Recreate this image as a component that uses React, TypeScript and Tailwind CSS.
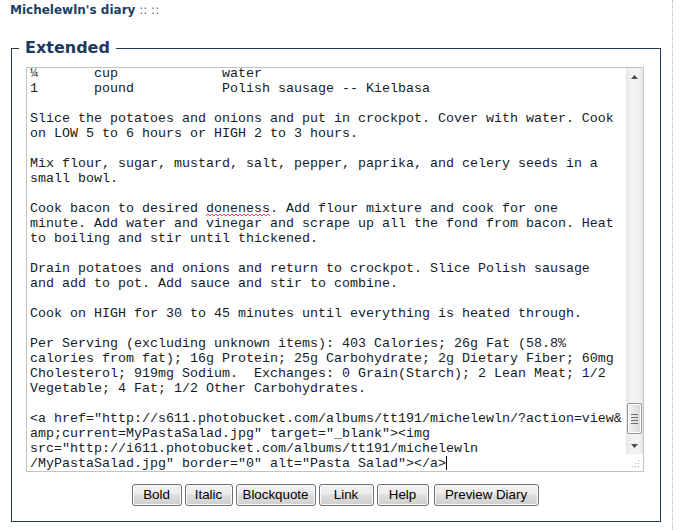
import type { ReactNode } from "react"

const mono = { fontFamily: '"Liberation Mono", "Courier New", monospace' }

function Squiggle({ children }: { children: ReactNode }) {
  return (
    <span className="relative">
      {children}
      <svg className="absolute left-0 bottom-[-1px]" width="64" height="3" viewBox="0 0 64 3">
        <path
          d="M0 2 L2 0 L4 2 L6 0 L8 2 L10 0 L12 2 L14 0 L16 2 L18 0 L20 2 L22 0 L24 2 L26 0 L28 2 L30 0 L32 2 L34 0 L36 2 L38 0 L40 2 L42 0 L44 2 L46 0 L48 2 L50 0 L52 2 L54 0 L56 2 L58 0 L60 2 L62 0 L64 2"
          fill="none"
          stroke="#e02020"
          strokeWidth="0.8"
        />
      </svg>
    </span>
  )
}

const lines: ReactNode[] = [
  "¼       cup             water",
  "1       pound           Polish sausage -- Kielbasa",
  "",
  "Slice the potatoes and onions and put in crockpot. Cover with water. Cook",
  "on LOW 5 to 6 hours or HIGH 2 to 3 hours.",
  "",
  "Mix flour, sugar, mustard, salt, pepper, paprika, and celery seeds in a",
  "small bowl.",
  "",
  <>
    {"Cook bacon to desired "}
    <Squiggle>doneness</Squiggle>
    {". Add flour mixture and cook for one"}
  </>,
  "minute. Add water and vinegar and scrape up all the fond from bacon. Heat",
  "to boiling and stir until thickened.",
  "",
  "Drain potatoes and onions and return to crockpot. Slice Polish sausage",
  "and add to pot. Add sauce and stir to combine.",
  "",
  "Cook on HIGH for 30 to 45 minutes until everything is heated through.",
  "",
  "Per Serving (excluding unknown items): 403 Calories; 26g Fat (58.8%",
  "calories from fat); 16g Protein; 25g Carbohydrate; 2g Dietary Fiber; 60mg",
  "Cholesterol; 919mg Sodium.  Exchanges: 0 Grain(Starch); 2 Lean Meat; 1/2",
  "Vegetable; 4 Fat; 1/2 Other Carbohydrates.",
  "",
  '<a href="http://s611.photobucket.com/albums/tt191/michelewln/?action=view&',
  'amp;current=MyPastaSalad.jpg" target="_blank"><img',
  'src="http://i611.photobucket.com/albums/tt191/michelewln',
  <>
    {'/MyPastaSalad.jpg" border="0" alt="Pasta Salad"></a>'}
    <span className="inline-block w-px h-[14px] bg-black align-[-3px]" />
  </>,
]

const buttons = [
  { label: "Bold", w: "w-[50px]" },
  { label: "Italic", w: "w-[48px]" },
  { label: "Blockquote", w: "w-[80px]" },
  { label: "Link", w: "w-[55px]" },
  { label: "Help", w: "w-[52px]" },
  { label: "Preview Diary", w: "w-[105px] ml-[2px]" },
]

function Arrow({ up }: { up?: boolean }) {
  return (
    <div className="h-[17px] flex items-center justify-center">
      <svg width="7" height="4" viewBox="0 0 7 4">
        <path d={up ? "M0 4 L3.5 0 L7 4 Z" : "M0 0 L3.5 4 L7 0 Z"} fill="#4d4d4d" />
      </svg>
    </div>
  )
}

function Scrollbar() {
  return (
    <div className="absolute right-0 top-0 bottom-[17px] w-[17px] bg-[linear-gradient(90deg,#e6e6e6,#f2f2f2_30%,#f2f2f2_70%,#e6e6e6)] flex flex-col">
      <Arrow up />
      <div className="flex-1 relative">
        <div className="absolute left-[1px] right-[1px] top-[318px] h-[31px] rounded-[2px] border border-[#989898] bg-[linear-gradient(90deg,#f4f4f4,#e6e6e6_50%,#d6d6d6)] shadow-[inset_0_0_0_1px_#fbfbfb] flex flex-col items-center justify-center gap-[2px]">
          <div className="w-[7px] h-px bg-[#6e6e6e]" />
          <div className="w-[7px] h-px bg-[#6e6e6e]" />
          <div className="w-[7px] h-px bg-[#6e6e6e]" />
          <div className="w-[7px] h-px bg-[#6e6e6e]" />
        </div>
      </div>
      <Arrow />
    </div>
  )
}

function Grip() {
  return (
    <svg className="absolute right-[3px] bottom-[3px]" width="9" height="9" viewBox="0 0 9 9">
      {[
        [7, 1],
        [7, 4],
        [4, 4],
        [7, 7],
        [4, 7],
        [1, 7],
      ].map(([x, y]) => (
        <rect key={`${x}-${y}`} x={x} y={y} width="1.2" height="1.2" fill="#b8b8b8" />
      ))}
    </svg>
  )
}

export default function App() {
  return (
    <div
      className="relative w-[679px] h-[530px] bg-white overflow-hidden"
      style={{ fontFamily: '"DejaVu Sans", Verdana, sans-serif' }}
    >
      {/* dotted column edge */}
      <div className="absolute top-0 bottom-0 left-[672px] border-l border-dotted border-[#b5b5b5]" />

      {/* header */}
      <div className="pl-[10px] pt-[3px] text-[12px] leading-[15px]">
        <span className="font-bold text-[#1d3d63]">Michelewln's diary</span>
        <span className="text-[#5d7291]"> :: ::</span>
      </div>

      <fieldset className="mt-[20px] ml-[11px] w-[650px] border border-[#1e3a56] pl-[7px] pr-[16px] pt-[9px] pb-[15px]">
        <legend className="px-[6px] text-[16px] leading-[20px] font-bold text-[#1b3a5b]">Extended</legend>

        <div className="pl-[7px]">
          {/* textarea */}
          <div className="relative h-[405px] border border-[#c3c3c3] bg-white overflow-hidden">
            <div className="absolute inset-0 right-[17px] overflow-hidden pl-[3px]">
              <div
                className="mt-[-2px] text-[13.33px] leading-[15px] text-[#1a1a1a] whitespace-pre"
                style={mono}
              >
                {lines.map((l, i) => (
                  <div key={i} className="h-[15px]">
                    {l}
                  </div>
                ))}
              </div>
            </div>
            <Scrollbar />
            <Grip />
          </div>

          {/* buttons */}
          <div
            className="mt-[12px] flex justify-center gap-[3px]"
            style={{ fontFamily: '"Liberation Sans", Arial, sans-serif' }}
          >
            {buttons.map((b) => (
              <button
                key={b.label}
                className={`${b.w} h-[22px] rounded-[3px] border border-[#707070] bg-[linear-gradient(#f2f2f2,#ebebeb_45%,#dddddd_50%,#cfcfcf)] shadow-[inset_0_0_0_1px_#fafafa] text-[13.33px] leading-none text-black`}
              >
                {b.label}
              </button>
            ))}
          </div>
        </div>
      </fieldset>
    </div>
  )
}
